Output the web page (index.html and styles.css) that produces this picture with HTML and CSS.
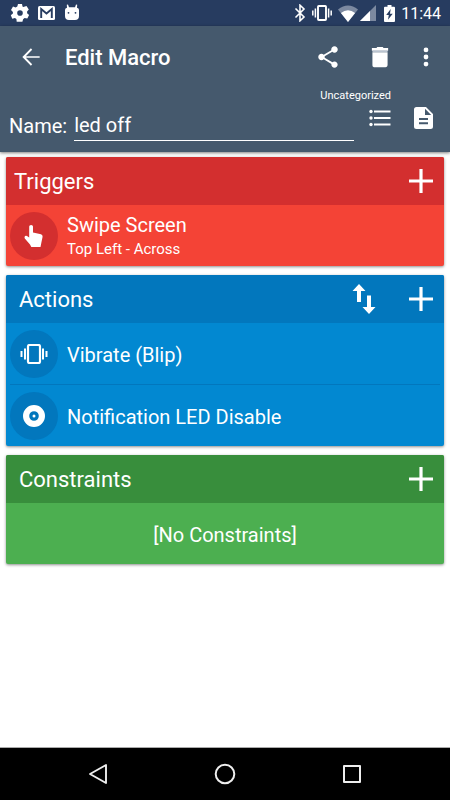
FILE: index.html
```html
<!DOCTYPE html>
<html lang="en">
<head>
<meta charset="utf-8">
<meta name="viewport" content="width=device-width, initial-scale=1">
<title>Edit Macro</title>
<link rel="stylesheet" href="styles.css">
</head>
<body>
<div class="status">
  <div class="status-left">
    <svg width="20" height="20" viewBox="0 0 20 20"><path fill="#fff" fill-rule="evenodd" d="M8 1h4l.5 2.600.8.400L16.500 3.100l2.300 3.300-1.700 2v1.900l2 1.700-1.800 3.400-2.700-.4-1.500 1.200-.7 2.600H6.700l-.3-2.700-1.500-1-2.600.7L.8 12.300l2.100-1.700V8.900L1 7.100l2-3.500 2.600.8 1.700-.9zM10 7.200a2.800 2.800 0 1 0 0 5.600 2.800 2.800 0 0 0 0-5.600z"/></svg>
    <svg width="17" height="14" viewBox="0 0 17 14"><rect width="17" height="14" rx="1.500" fill="#fff"/><path d="M3.200 12V3l5.300 4.500L13.800 3v9" fill="none" stroke="#273c60" stroke-width="1.900"/></svg>
    <svg width="14" height="18" viewBox="0 0 14 18"><path fill="#fff" d="M0 6Q0 4 2 3.700L1.800.8 3 .5l1 2.800h6l1-2.800 1.200.3L12 3.700q2 .3 2 2.300v6q0 4-4 4H4q-4 0-4-4z"/><circle cx="3.500" cy="8.800" r=".9" fill="#273c60"/><circle cx="10.500" cy="8.800" r=".9" fill="#273c60"/></svg>
  </div>
  <div class="status-right">
    <svg width="12" height="18" viewBox="0 0 12 18"><path d="M1.500 4.500l8.500 8.500-4 3.800V1.200L10 5l-8.500 8.500" fill="none" stroke="#fff" stroke-width="1.600"/></svg>
    <svg class="vibrate" width="20" height="16" viewBox="0 0 20 16"><path d="M.8 5.500v5M3.400 3.500v9M16.600 3.500v9M19.200 5.500v5" stroke="#fff" stroke-width="1.500"/><rect x="6" y="1" width="8" height="14" rx=".8" fill="none" stroke="#fff" stroke-width="1.900"/></svg>
    <svg class="wifi" width="20" height="17" viewBox="0 0 20 17"><path fill="#7c89a0" d="M0 4.500Q10-3.500 20 4.500L10 17z"/><path fill="#fff" d="M2.900 8Q10 2.500 17.100 8L10 17z"/></svg>
    <svg class="signal" width="16" height="16" viewBox="0 0 16 16"><path fill="#7c89a0" d="M0 16L16 0v16z"/><path fill="#fff" d="M0 16L10 6v10z"/></svg>
    <svg class="battery" width="11" height="17" viewBox="0 0 11 17"><path fill="#fff" d="M3.500 0h4v1.800H10q1 0 1 1V16q0 1-1 1H1q-1 0-1-1V2.800q0-1 1-1h2.500z"/><path fill="#273c60" d="M6.700 4L2.200 9.900h2.600L4 14.700l4.700-6H6z"/></svg>
    <span class="time">11:44</span>
  </div>
</div>
<header class="header">
  <div class="toolbar">
    <button class="icon-btn" aria-label="Back"><svg width="26" height="26" viewBox="0 0 24 24"><path fill="#fff" d="M20 11.200H7.200l5.900-5.900L11.900 4 4 12l7.900 8 1.200-1.300-5.900-5.900H20z"/></svg></button>
    <h1 class="title">Edit Macro</h1>
    <button class="icon-btn" aria-label="Share"><svg width="26" height="26" viewBox="0 0 24 24"><path fill="#fff" d="M18 16.080c-.76 0-1.440.3-1.960.770L8.910 12.700c.05-.23.090-.46.090-.7s-.04-.47-.09-.7l7.050-4.110c.54.5 1.250.810 2.040.810 1.660 0 3-1.340 3-3s-1.340-3-3-3-3 1.340-3 3c0 .24.040.470.090.7L8.040 9.810C7.500 9.310 6.790 9 6 9c-1.660 0-3 1.340-3 3s1.340 3 3 3c.79 0 1.500-.31 2.040-.81l7.120 4.160c-.05.210-.08.430-.08.650 0 1.610 1.310 2.920 2.920 2.920s2.920-1.310 2.920-2.920-1.310-2.920-2.920-2.920z"/></svg></button>
    <button class="icon-btn" aria-label="Delete"><svg width="26" height="26" viewBox="0 0 24 24"><path fill="#fff" d="M5 7.500h14V19q0 2.500-2 2.500H7.500Q5 21.500 5 19.500z"/><path fill="#fff" d="M4.500 3.800h4.200l.8-1.100h5l.8 1.100h4.200v2.400h-15z"/><path fill="#b9c3cf" d="M5 6.200h14v1.300H5z"/></svg></button>
    <button class="icon-btn more" aria-label="More options"><svg width="26" height="26" viewBox="0 0 24 24" fill="#fff"><circle cx="12" cy="5.500" r="2.200"/><circle cx="12" cy="12" r="2.200"/><circle cx="12" cy="18.500" r="2.200"/></svg></button>
  </div>
  <form class="details">
    <label for="name">Name:</label>
    <input id="name" type="text" value="led off">
    <button type="button" class="category"><span>Uncategorized</span>
      <svg width="22" height="18" viewBox="0 0 22 18"><path d="M5 2.500h16.500M5 9h16.500M5 15.500h16.500" stroke="#fff" stroke-width="2.200"/><g fill="#fff"><circle cx="2" cy="2.500" r="1.700"/><circle cx="2" cy="9" r="1.700"/><circle cx="2" cy="15.500" r="1.700"/></g></svg>
    </button>
    <button type="button" class="icon-btn note" aria-label="Notes"><svg width="19" height="22" viewBox="0 0 19 22"><path fill="#fff" fill-rule="evenodd" d="M2.500 0H12l7 7v12.500q0 2.500-2.500 2.500h-14Q0 22 0 19.500v-17Q0 0 2.500 0zM11 1.800V8h6.200zM5 11v2h9v-2zm0 4.200v2h9v-2z"/></svg></button>
  </form>
</header>
<main class="cards">
  <section class="card triggers">
    <div class="card-head"><h2>Triggers</h2>
      <button class="icon-btn" aria-label="Add trigger"><svg width="24" height="24" viewBox="0 0 24 24"><path d="M12 0v24M0 12h24" stroke="#fff" stroke-width="3.200"/></svg></button>
    </div>
    <ul>
      <li><span class="badge"><svg width="20" height="24" viewBox="0 0 20 24"><path fill="#fff" d="M5.200 2.500Q5.200 1 7.100 1t1.900 1.500V8.400l8 1.800q1.800.5 1.600 2.500L17.300 19l-.8 4H7.300L6 20.500l-5.200-6Q.1 13.300 1 12.100q1-.7 2-.1l2.200 1.500z"/></svg></span>
        <span class="texts"><span>Swipe Screen</span><small>Top Left - Across</small></span></li>
    </ul>
  </section>
  <section class="card actions">
    <div class="card-head"><h2>Actions</h2>
      <button class="icon-btn" aria-label="Reorder actions"><svg width="24" height="30" viewBox="0 0 24 30"><path fill="#fff" d="M7 0l6.500 7H9v11H5V7H.5zM17 30l-6.500-7H15V11.500h4V23h4.500z"/></svg></button>
      <button class="icon-btn" aria-label="Add action"><svg width="24" height="24" viewBox="0 0 24 24"><path d="M12 0v24M0 12h24" stroke="#fff" stroke-width="3.200"/></svg></button>
    </div>
    <ul>
      <li><span class="badge"><svg width="28" height="20" viewBox="0 0 28 20"><path d="M1.500 7v6M5 4.500v11M23 4.500v11M26.500 7v6" stroke="#fff" stroke-width="2"/><rect x="8" y="1" width="12" height="18" rx="1.500" fill="none" stroke="#fff" stroke-width="2.200"/></svg></span>
        <span class="texts"><span>Vibrate (Blip)</span></span></li>
      <li><span class="badge"><svg width="22" height="22" viewBox="0 0 22 22"><path fill="#fff" fill-rule="evenodd" d="M11 0a11 11 0 1 0 0 22 11 11 0 0 0 0-22zm0 6.200a4.800 4.800 0 1 1 0 9.600 4.800 4.800 0 0 1 0-9.600z"/><circle cx="11" cy="11" r="1.500" fill="#fff"/></svg></span>
        <span class="texts"><span>Notification LED Disable</span></span></li>
    </ul>
  </section>
  <section class="card constraints">
    <div class="card-head"><h2>Constraints</h2>
      <button class="icon-btn" aria-label="Add constraint"><svg width="24" height="24" viewBox="0 0 24 24"><path d="M12 0v24M0 12h24" stroke="#fff" stroke-width="3.200"/></svg></button>
    </div>
    <p>[No Constraints]</p>
  </section>
</main>
<nav class="navbar" aria-label="System">
  <button class="icon-btn" aria-label="Back"><svg width="22" height="22" viewBox="0 0 22 22"><path d="M19 2v18L3 11z" fill="none" stroke="#eee" stroke-width="1.900" stroke-linejoin="round"/></svg></button>
  <button class="icon-btn" aria-label="Home"><svg width="22" height="22" viewBox="0 0 22 22"><circle cx="11" cy="11" r="9.300" fill="none" stroke="#eee" stroke-width="2"/></svg></button>
  <button class="icon-btn" aria-label="Recent apps"><svg width="22" height="22" viewBox="0 0 22 22"><rect x="3" y="3" width="16" height="16" fill="none" stroke="#eee" stroke-width="2" stroke-linejoin="round"/></svg></button>
</nav>
</body>
</html>
```
FILE: styles.css
```css
* { box-sizing: border-box; }
body {
  margin: 0;
  min-height: 100vh;
  display: flex;
  flex-direction: column;
  background: #fff;
  color: #fff;
  font-family: Roboto, "Liberation Sans", sans-serif;
  font-size: 20px;
  line-height: 24px;
}
svg { display: block; flex: none; }
h1, h2, p, ul { margin: 0; padding: 0; font-weight: 400; }
button, input { font: inherit; color: inherit; background: none; border: 0; padding: 0; margin: 0; }
.icon-btn { display: flex; align-items: center; justify-content: center; }

.status {
  height: 26px;
  padding: 0 9px 0 10px;
  display: flex;
  align-items: center;
  justify-content: space-between;
  background: #273c60;
}
.status-left { display: flex; align-items: center; gap: 8px; }
.status-left svg:last-child { margin-left: 2px; }
.status-right { display: flex; align-items: center; gap: 6px; }
.signal { margin-left: -4px; }
.battery { margin-left: 2px; }
.time { padding-top: 2px; font-size: 16px; }

.header {
  background: #45596d;
  box-shadow: 0 1px 3px rgba(0, 0, 0, .5);
}
.toolbar {
  height: 62px;
  padding: 0 11px 0 18px;
  display: flex;
  align-items: center;
  gap: 26px;
}
.title {
  flex: 1;
  margin-left: -5px;
  padding-top: 2px;
  font-size: 22px;
  font-weight: 500;
}
.more { margin-left: -6px; }
.details {
  height: 64px;
  padding: 0 16px 11px 9px;
  display: flex;
  align-items: flex-end;
}
.details label { padding-bottom: 3px; }
.details input {
  flex: 1;
  min-width: 0;
  height: 31px;
  margin-left: 7px;
  border-bottom: 1px solid #fff;
  outline: 0;
}
.category {
  width: 71px;
  margin: 0 23px 14px -34px;
  display: flex;
  flex-direction: column;
  align-items: flex-end;
  gap: 6px;
  font-size: 11px;
  line-height: 14px;
}
.note { margin: 0 1px 12px 0; }

.cards {
  flex: 1;
  padding: 5px 6px;
  display: flex;
  flex-direction: column;
  gap: 9px;
}
.card {
  border-radius: 2px;
  overflow: hidden;
  box-shadow: 0 1px 3px rgba(0, 0, 0, .45);
}
.card-head {
  height: 48px;
  padding: 0 11px 0 13px;
  display: flex;
  align-items: center;
  gap: 33px;
}
.card-head h2 { flex: 1; padding-top: 2px; font-size: 22px; }
.triggers .card-head { padding-left: 8px; background: #d32f2f; }
.triggers { background: #f44336; }
.actions .card-head { background: #0277bd; }
.actions { background: #0288d1; }
.constraints .card-head { background: #388e3c; }
.constraints { background: #4caf50; }
.card ul { list-style: none; padding: 0 4px; }
.card li {
  height: 61px;
  display: flex;
  align-items: center;
  gap: 9px;
}
.card li + li { height: 62px; border-top: 1px solid #0277bd; }
.badge {
  width: 48px;
  height: 48px;
  border-radius: 50%;
  display: flex;
  align-items: center;
  justify-content: center;
}
.triggers .badge { background: #d32f2f; }
.actions .badge { background: #0277bd; }
.texts { display: flex; flex-direction: column; padding-top: 2px; }
.texts small { font-size: 15px; }
.constraints p {
  height: 61px;
  padding-top: 2px;
  display: flex;
  align-items: center;
  justify-content: center;
}

.navbar {
  height: 53px;
  padding: 0 35px;
  display: flex;
  align-items: center;
  justify-content: space-around;
  background: #000;
  border-top: 1px solid #aaa;
}
```
